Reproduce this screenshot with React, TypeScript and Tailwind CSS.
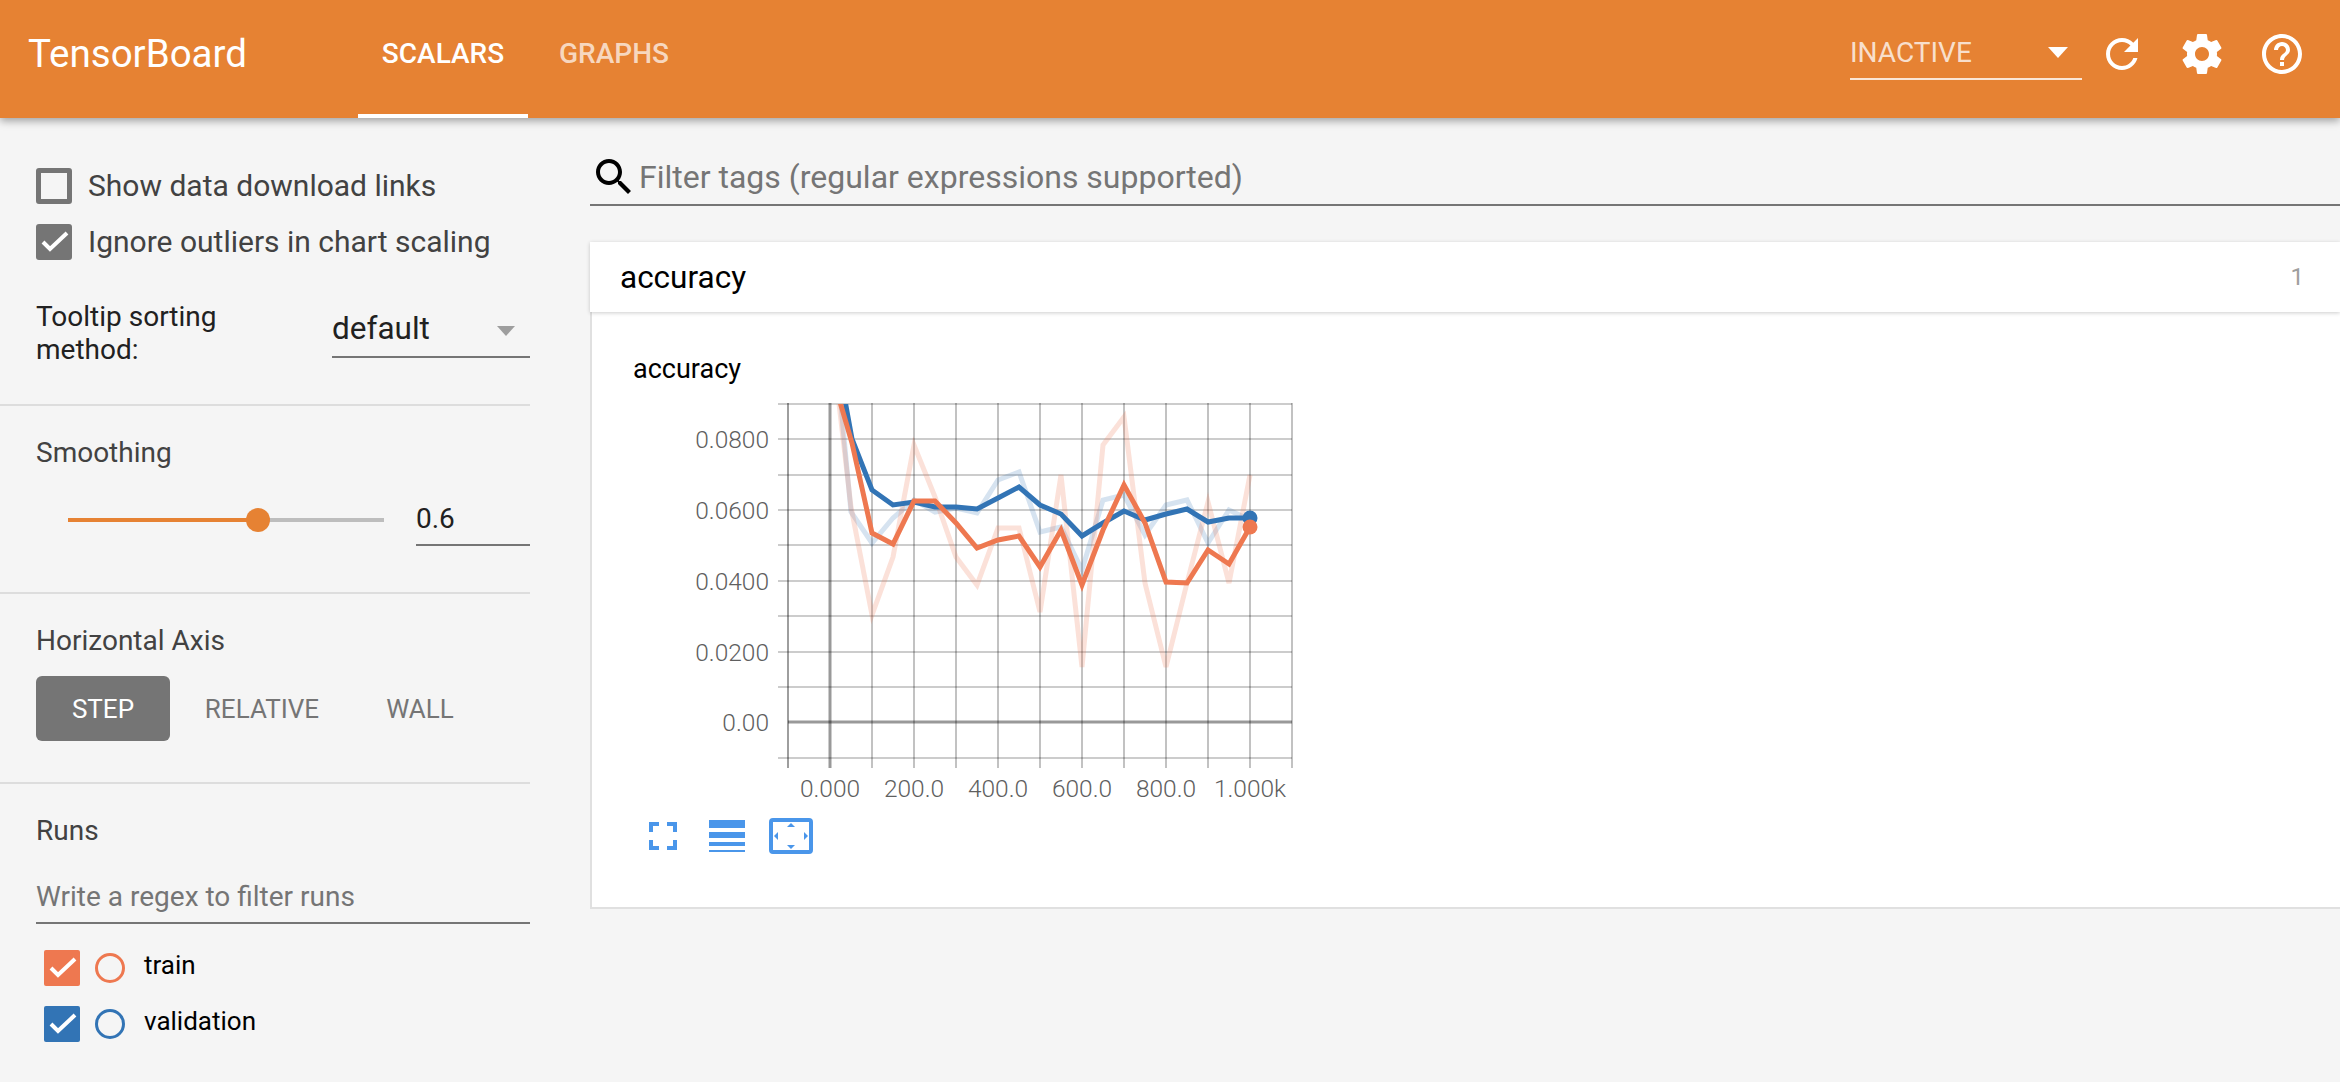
const blueRaw = [[840, 395], [851, 512], [872, 543], [893, 518], [914, 500], [935, 512], [956, 508], [977, 513], [998, 480], [1019, 472], [1040, 532], [1061, 527], [1082, 570], [1103, 500], [1124, 495], [1145, 535], [1166, 505], [1187, 500], [1208, 543], [1229, 510], [1250, 520]]
const orangeRaw = [[838, 395], [851, 507], [872, 615], [893, 557], [914, 445], [935, 497], [956, 557], [977, 585], [998, 528], [1019, 528], [1040, 612], [1061, 475], [1082, 667], [1103, 445], [1124, 417], [1145, 583], [1166, 667], [1187, 583], [1208, 502], [1229, 583], [1250, 475]]
const blueLine = [[844, 395], [852, 439], [872, 490], [893, 505], [914, 502], [935, 507], [956, 507], [977, 509], [998, 498], [1019, 487], [1040, 505], [1061, 514], [1082, 536], [1103, 523], [1124, 511], [1145, 520], [1166, 514], [1187, 509], [1208, 522], [1229, 518], [1250, 518]]
const orangeLine = [[838, 395], [852, 443], [872, 533], [893, 544], [914, 501], [935, 501], [956, 523], [977, 548], [998, 540], [1019, 536], [1040, 567], [1061, 530], [1082, 585], [1103, 530], [1124, 485], [1145, 523], [1166, 582], [1187, 583], [1208, 550], [1229, 564], [1250, 527]]

const pts = (list: number[][]) => list.map((p) => p.join(',')).join(' ')

const vLines = [872, 914, 956, 998, 1040, 1082, 1124, 1166, 1208, 1250, 1292]
const hLines = [404, 439, 475, 510, 545, 581, 616, 652, 687, 758]
const yLabels = [['0.0800', 439], ['0.0600', 510], ['0.0400', 581], ['0.0200', 652], ['0.00', 722]] as const
const xLabels = [['0.000', 830], ['200.0', 914], ['400.0', 998], ['600.0', 1082], ['800.0', 1166], ['1.000k', 1250]] as const

const Icon = ({ d, size = 48, className = 'fill-white' }: { d: string; size?: number; className?: string }) => (
	<svg viewBox="0 0 24 24" width={size} height={size} className={className}>
		<path d={d} />
	</svg>
)

const Check = () => (
	<svg viewBox="0 0 36 36" className="h-full w-full">
		<path d="M7 18l7 7L31 9" fill="none" stroke="white" strokeWidth="4" />
	</svg>
)

const RunRow = ({ name, box, ring }: { name: string; box: string; ring: string }) => (
	<div className="ml-2 flex h-9 items-center">
		<div className={`h-9 w-9 rounded-[2px] ${box}`}>
			<Check />
		</div>
		<div className={`ml-[15px] h-[30px] w-[30px] rounded-full border-[3px] ${ring}`} />
		<span className="ml-[19px] mb-[6px] text-[26px] leading-[30px] text-black">{name}</span>
	</div>
)

const Chart = () => (
	<svg viewBox="640 395 660 410" width={660} height={410} className="block">
		{hLines.map((y) => (
			<line key={y} x1="778" x2="1292" y1={y} y2={y} stroke="#000" strokeOpacity="0.2" strokeWidth="2" />
		))}
		{vLines.map((x) => (
			<line key={x} x1={x} x2={x} y1="403" y2="768" stroke="#000" strokeOpacity="0.24" strokeWidth="2" />
		))}
		<line x1="788" x2="788" y1="403" y2="768" stroke="#000" strokeOpacity="0.38" strokeWidth="2" />
		<line x1="830" x2="830" y1="403" y2="768" stroke="#000" strokeOpacity="0.4" strokeWidth="3" />
		<line x1="788" x2="1292" y1="722" y2="722" stroke="#000" strokeOpacity="0.4" strokeWidth="3" />
		<clipPath id="plot">
			<rect x="788" y="404" width="504" height="354" />
		</clipPath>
		<g clipPath="url(#plot)" fill="none" strokeLinejoin="miter">
			<polyline points={pts(blueRaw)} stroke="#3274b5" strokeOpacity="0.2" strokeWidth="5" />
			<polyline points={pts(orangeRaw)} stroke="#ee7850" strokeOpacity="0.22" strokeWidth="5" />
			<polyline points={pts(blueLine)} stroke="#3274b5" strokeWidth="5" />
			<polyline points={pts(orangeLine)} stroke="#ee7850" strokeWidth="5" />
		</g>
		<circle cx="1250" cy="518" r="7.5" fill="#3274b5" />
		<circle cx="1250" cy="527" r="7.5" fill="#ee7850" />
		<g className="fill-[#5f5f5f] font-[Roboto,sans-serif] text-[24.5px] font-light">
			{yLabels.map(([t, y]) => (
				<text key={t} x="769" y={y + 9} textAnchor="end">{t}</text>
			))}
			{xLabels.map(([t, x]) => (
				<text key={t} x={x} y="797" textAnchor="middle">{t}</text>
			))}
		</g>
	</svg>
)

export default function App() {
	return (
		<div className="flex min-h-[1082px] flex-col overflow-hidden bg-[#f5f5f5] font-[Roboto,sans-serif]">
			<header className="relative z-10 flex h-[118px] shrink-0 bg-[#e68233] text-white shadow-[0_3px_8px_rgba(0,0,0,0.35)]">
				<div className="ml-[28px] w-[330px] pb-[10px] text-[38.5px] leading-[108px]">TensorBoard</div>
				<nav className="flex text-[28px] font-medium">
					<div className="flex h-[118px] w-[170px] items-start justify-center border-b-4 border-white pt-[34px] leading-[40px]">SCALARS</div>
					<div className="flex h-[118px] w-[170px] items-start justify-center pt-[34px] pl-[2px] leading-[40px] text-white/70">GRAPHS</div>
				</nav>
				<div className="ml-auto flex items-start pr-[18px]">
					<div className="relative mt-[32px] flex h-[48px] w-[232px] items-center border-b-2 border-white/80 pb-[4px] text-[28px] text-white/75">
						INACTIVE
						<div className="absolute top-[15px] right-[14px] h-0 w-0 border-x-[10px] border-t-[11px] border-x-transparent border-t-white" />
					</div>
					<div className="mt-[30px] flex w-[240px]">
						<div className="flex w-[80px] justify-center">
							<Icon d="M17.65 6.35C16.2 4.9 14.21 4 12 4c-4.42 0-7.99 3.58-7.99 8s3.57 8 7.99 8c3.73 0 6.84-2.55 7.73-6h-2.08c-.82 2.33-3.04 4-5.65 4-3.31 0-6-2.69-6-6s2.69-6 6-6c1.66 0 3.14.69 4.22 1.78L13 11h7V4l-2.35 2.35z" />
						</div>
						<div className="flex w-[80px] justify-center">
							<Icon d="M19.43 12.98c.04-.32.07-.64.07-.98s-.03-.66-.07-.98l2.11-1.65c.19-.15.24-.42.12-.64l-2-3.46c-.12-.22-.39-.3-.61-.22l-2.49 1c-.52-.4-1.08-.73-1.69-.98l-.38-2.65C14.46 2.18 14.25 2 14 2h-4c-.25 0-.46.18-.49.42l-.38 2.65c-.61.25-1.17.59-1.69.98l-2.49-1c-.23-.09-.49 0-.61.22l-2 3.46c-.13.22-.07.49.12.64l2.11 1.65c-.04.32-.07.65-.07.98s.03.66.07.98l-2.11 1.65c-.19.15-.24.42-.12.64l2 3.46c.12.22.39.3.61.22l2.49-1c.52.4 1.08.73 1.69.98l.38 2.65c.03.24.24.42.49.42h4c.25 0 .46-.18.49-.42l.38-2.65c.61-.25 1.17-.59 1.69-.98l2.49 1c.23.09.49 0 .61-.22l2-3.46c.12-.22.07-.49-.12-.64l-2.11-1.65zM12 15.5c-1.93 0-3.5-1.57-3.5-3.5s1.57-3.5 3.5-3.5 3.5 1.57 3.5 3.5-1.57 3.5-3.5 3.5z" />
						</div>
						<div className="flex w-[80px] justify-center">
							<Icon d="M11 18h2v-2h-2v2zm1-16C6.48 2 2 6.48 2 12s4.48 10 10 10 10-4.48 10-10S17.52 2 12 2zm0 18c-4.41 0-8-3.59-8-8s3.59-8 8-8 8 3.59 8 8-3.59 8-8 8zm0-14c-2.21 0-4 1.79-4 4h2c0-1.1.9-2 2-2s2 .9 2 2c0 2-3 1.75-3 5h2c0-2.25 3-2.5 3-5 0-2.21-1.79-4-4-4z" />
						</div>
					</div>
				</div>
			</header>

			<div className="flex flex-1">
				<aside className="w-[530px] shrink-0 text-[#424242]">
					<section className="h-[288px] border-b-2 border-[#ddd] pt-[50px] pl-9">
						<div className="flex h-9 items-center text-[30px]">
							<div className="h-9 w-9 rounded-[3px] border-[5px] border-[#757575]" />
							<span className="mb-[2px] ml-4">Show data download links</span>
						</div>
						<div className="mt-5 flex h-9 items-center text-[30px]">
							<div className="h-9 w-9 rounded-[3px] bg-[#757575]">
								<Check />
							</div>
							<span className="mb-[2px] ml-4">Ignore outliers in chart scaling</span>
						</div>
						<div className="mt-10 flex items-start justify-between">
							<div className="text-[28px] leading-[33px] text-[#212121]">Tooltip sorting<br />method:</div>
							<div className="relative flex h-[58px] w-[198px] items-center border-b-2 border-[#757575] pt-[2px] text-[31.5px] text-[#212121]">
								default
								<div className="absolute top-[26px] right-[15px] h-0 w-0 border-x-[9px] border-t-[10px] border-x-transparent border-t-[#9e9e9e]" />
							</div>
						</div>
					</section>

					<section className="h-[188px] border-b-2 border-[#ddd] pt-[31px] pl-9">
						<div className="text-[28px] leading-8">Smoothing</div>
						<div className="mt-[23px] flex h-[54px] items-center">
							<div className="relative mt-[2px] ml-8 flex h-1 w-[316px] bg-[#bdbdbd]">
								<div className="h-full w-[190px] bg-[#e68233]" />
								<div className="absolute top-[-10px] left-[178px] h-6 w-6 rounded-full bg-[#e68233]" />
							</div>
							<div className="ml-8 flex h-[54px] flex-1 items-center border-b-2 border-[#757575] pt-[2px] text-[28px] text-[#212121]">0.6</div>
						</div>
					</section>

					<section className="h-[190px] border-b-2 border-[#ddd] pt-[31px] pl-9">
						<div className="text-[28px] leading-8">Horizontal Axis</div>
						<div className="mt-[19px] flex items-center text-[26px] text-[#757575]">
							<div className="flex h-[65px] w-[134px] items-center justify-center rounded-[6px] bg-[#757575] pt-[2px] text-white">STEP</div>
							<div className="flex w-[184px] justify-center pt-[2px]">RELATIVE</div>
							<div className="flex w-[132px] justify-center pt-[2px]">WALL</div>
						</div>
					</section>

					<section className="pt-[31px] pl-9">
						<div className="text-[28px] leading-8">Runs</div>
						<div className="mt-[23px] flex h-[54px] items-center border-b-2 border-[#757575] pt-[2px] text-[28px] text-[#757575]">Write a regex to filter runs</div>
						<div className="mt-[26px] flex flex-col gap-5">
							<RunRow name="train" box="bg-[#ee7850]" ring="border-[#ee7850]" />
							<RunRow name="validation" box="bg-[#3274b5]" ring="border-[#3274b5]" />
						</div>
					</section>
				</aside>

				<main className="ml-[60px] flex-1">
					<div className="mt-[32px] flex h-[56px] items-center border-b-2 border-[#757575]">
						<Icon d="M15.5 14h-.79l-.28-.27C15.41 12.59 16 11.11 16 9.5 16 5.91 13.09 3 9.5 3S3 5.91 3 9.5 5.91 16 9.5 16c1.61 0 3.09-.59 4.23-1.57l.27.28v.79l5 4.99L20.49 19l-4.99-5zm-6 0C7.01 14 5 11.99 5 9.5S7.01 5 9.5 5 14 7.01 14 9.5 11.99 14 9.5 14z" className="fill-black" />
						<span className="ml-[1px] text-[32px] text-[#757575]">Filter tags (regular expressions supported)</span>
					</div>

					<div className="relative mt-9 flex h-[70px] items-center justify-between bg-white pr-[36px] pl-[30px] shadow-[0_1px_4px_rgba(0,0,0,0.2)]">
						<span className="pt-[2px] text-[31.5px] text-black">accuracy</span>
						<span className="text-[24px] text-[#9e9e9e]">1</span>
					</div>

					<div className="h-[597px] border-b-2 border-l-2 border-[#e0e0e0] bg-white pt-[41px] pl-[41px]">
						<div className="text-[27px] leading-8 text-black">accuracy</div>
						<div className="mt-[10px] ml-[7px]">
							<Chart />
						</div>
						<div className="mt-[13px] ml-[16px] flex h-9 items-center">
							<svg viewBox="0 0 28 28" width={28} height={28} className="fill-[#4a96ea]">
								<path d="M0 0h10v4H4v6H0zM18 0h10v10h-4V4h-6zM0 18h4v6h6v4H0zM24 18h4v10H18v-4h6z" />
							</svg>
							<svg viewBox="0 0 36 32" width={36} height={32} className="ml-8 fill-[#4a96ea]">
								<path d="M0 0h36v8H0zM0 12h36v6H0zM0 22h36v4H0zM0 30h36v2H0z" />
							</svg>
							<svg viewBox="0 0 44 36" width={44} height={36} className="ml-6">
								<rect x="2" y="2" width="40" height="32" rx="2" fill="none" stroke="#4a96ea" strokeWidth="4" />
								<path d="M22 5l4 4h-8zM22 31l-4-4h8zM5 18l4-4v8zM39 18l-4 4v-8z" fill="#4a96ea" />
							</svg>
						</div>
					</div>
				</main>
			</div>
		</div>
	)
}
